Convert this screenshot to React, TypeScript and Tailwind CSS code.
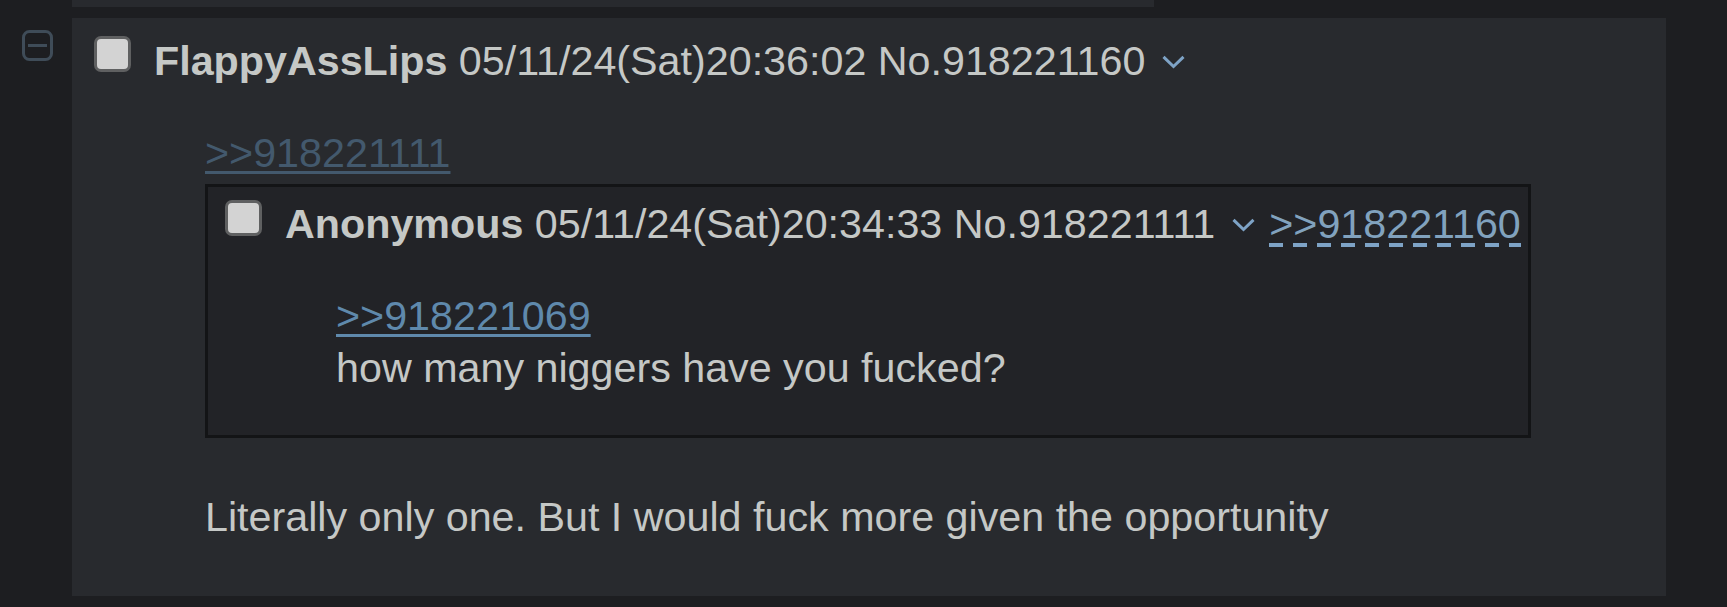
import React from "react";

function Checkbox() {
  return (
    <div className="w-[37px] h-[36px] shrink-0 rounded-[7px] border-[3px] border-[#5f6061] bg-[#d3d3d3]" />
  );
}

function Chevron({ className }: { className?: string }) {
  return (
    <svg width="23" height="14" viewBox="0 0 23 14" className={className}>
      <polyline
        points="1.5,1.8 11.5,11.5 21.5,1.8"
        fill="none"
        stroke="#7ea3c6"
        strokeWidth="3"
      />
    </svg>
  );
}

export default function App() {
  return (
    <div className="w-[1727px] h-[607px] overflow-hidden bg-[#1d1e21] font-['Liberation_Sans',Arial,sans-serif] text-[41.25px] text-[#c5c8c6]">
      <div className="ml-[72px] w-[1082px] h-[7px] bg-[#282a2e]" />
      <div className="flex mt-[11px]">
        <div className="w-[72px] shrink-0 pl-[22px] pt-[12px]">
          <svg width="31" height="31" viewBox="0 0 31 31">
            <rect x="1.5" y="1.5" width="28" height="28" rx="6" fill="none" stroke="#3f4c58" strokeWidth="3" />
            <line x1="6" y1="15.5" x2="25" y2="15.5" stroke="#3f4c58" strokeWidth="3" />
          </svg>
        </div>
        <div className="w-[1594px] h-[578px] shrink-0 bg-[#282a2e] pt-[17px]">
          <div className="flex items-start pl-[22px] leading-[52px] whitespace-nowrap">
            <div className="mt-[1px]">
              <Checkbox />
            </div>
            <span className="ml-[23px] font-bold">FlappyAssLips</span>
            <span>&nbsp;05/11/24(Sat)20:36:02 No.918221160</span>
            <Chevron className="ml-[17px] mt-[20px]" />
          </div>
          <div className="ml-[133px] mt-[40px] leading-[52px]">
            <div>
              <span className="underline decoration-[3px] underline-offset-[4px] text-[#43596d]">&gt;&gt;918221111</span>
            </div>
            <div className="mt-[5px] w-[1326px] border-[3px] border-[#131416] bg-[#222327] pt-[11px] pb-[41px]">
              <div className="flex items-start pl-[17px] whitespace-nowrap">
                <div className="mt-[2px]">
                  <Checkbox />
                </div>
                <span className="ml-[23px] font-bold">Anonymous</span>
                <span>&nbsp;05/11/24(Sat)20:34:33 No.918221111</span>
                <Chevron className="ml-[17px] mt-[20px]" />
                <span className="ml-[14px] text-[#81a2be] bg-[linear-gradient(to_right,#7ea3c6_14px,transparent_14px)] bg-[length:24px_4px] bg-[position:0_45px] bg-repeat-x">&gt;&gt;918221160</span>
              </div>
              <div className="ml-[128px] mt-[40px]">
                <div>
                  <span className="underline decoration-[3px] underline-offset-[4px] text-[#5f89ac]">&gt;&gt;918221069</span>
                </div>
                <div>how many niggers have you fucked?</div>
              </div>
            </div>
            <div className="mt-[53px]">Literally only one. But I would fuck more given the opportunity</div>
          </div>
        </div>
      </div>
    </div>
  );
}
